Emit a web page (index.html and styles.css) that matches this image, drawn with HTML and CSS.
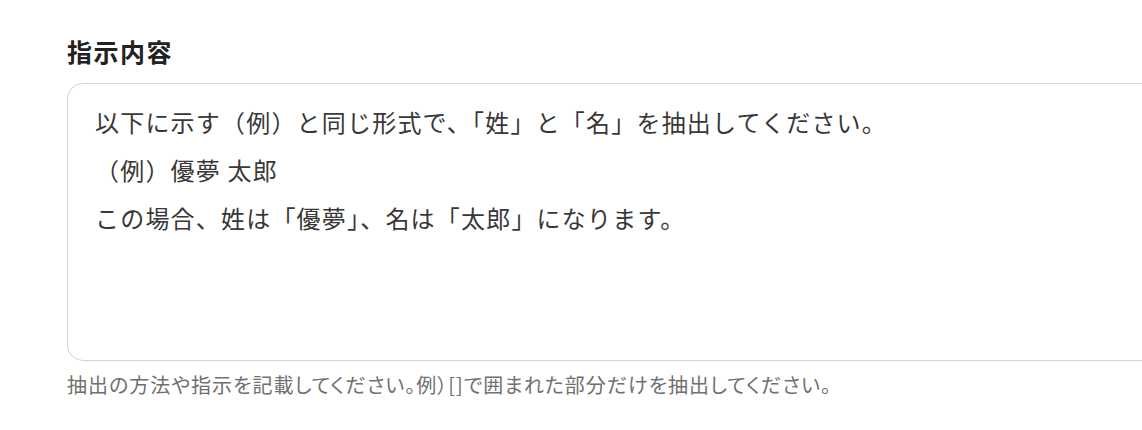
FILE: index.html
```html
<!DOCTYPE html>
<html lang="ja">
<head>
<meta charset="utf-8">
<link rel="stylesheet" href="styles.css">
</head>
<body>
<div class="field">
  <div class="label">指示内容</div>
  <div class="box">
    <p>以下に示す（例）と同じ形式で、「姓」と「名」を抽出してください。</p>
    <p>（例）優夢 太郎</p>
    <p>この場合、姓は「優夢」、名は「太郎」になります。</p>
  </div>
  <div class="help">抽出の方法や指示を記載してください。例）[]で囲まれた部分だけを抽出してください。</div>
</div>
</body>
</html>
```
FILE: styles.css
```css
html, body { margin: 0; padding: 0; background: #fff; }
body {
  font-family: "Noto Sans CJK JP", "Noto Sans", sans-serif;
  width: 1142px;
  height: 430px;
  overflow: hidden;
}
.field {
  padding: 35px 0 0 67px;
}
.label {
  font-size: 25px;
  font-weight: 700;
  letter-spacing: 1.5px;
  color: #222;
  line-height: 32px;
  margin-bottom: 16px;
}
.box {
  width: 1120px;
  height: 278px;
  box-sizing: border-box;
  border: 1px solid #d0d3dc;
  border-radius: 16px;
  padding: 14px 27px;
  font-size: 24px;
  letter-spacing: 1.2px;
  color: #383838;
  line-height: 48px;
}
.box p { margin: 0; }
.help {
  margin-top: 12px;
  font-size: 20px;
  letter-spacing: 1px;
  color: #707070;
  line-height: 24px;
  font-feature-settings: "palt";
}
```
